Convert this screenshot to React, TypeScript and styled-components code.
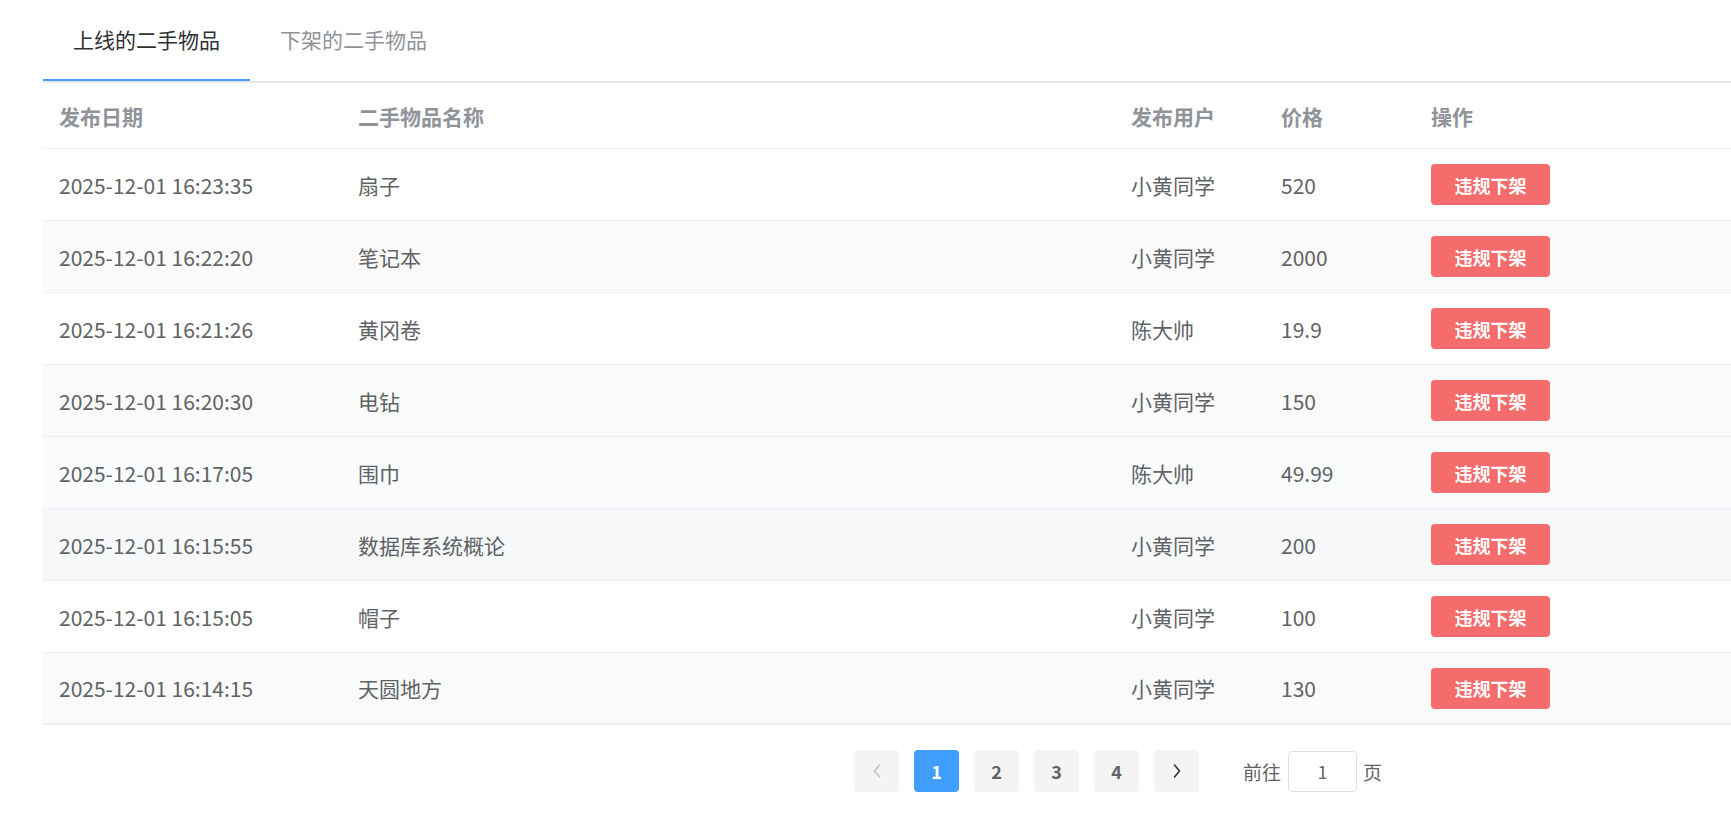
import React from "react";
import styled, { createGlobalStyle } from "styled-components";

const GlobalStyle = createGlobalStyle`
  html, body { margin: 0; padding: 0; background: #fff; }
  body { font-family: "Noto Sans CJK SC", "Noto Sans", sans-serif; }
  * { box-sizing: border-box; }
`;

const Page = styled.div`
  padding-left: 43px;
  width: 1731px;
  overflow: hidden;
`;

const TabBar = styled.div`
  display: flex;
  height: 83px;
  border-bottom: 2px solid #e4e7ed;
`;

const Tab = styled.div<{ $active?: boolean }>`
  height: 81px;
  padding: 0 30px;
  line-height: 78px;
  font-size: 21px;
  color: ${(p) => (p.$active ? "#303133" : "#909399")};
  border-bottom: 2px solid ${(p) => (p.$active ? "#409eff" : "transparent")};
`;

const Row = styled.div<{ $bg?: string; $header?: boolean; $last?: boolean }>`
  display: grid;
  grid-template-columns: 299px 773px 150px 150px 1fr;
  align-items: center;
  height: ${(p) => (p.$header ? "66px" : "72px")};
  background: ${(p) => p.$bg || "#fff"};
  border-bottom: ${(p) => (p.$last ? "2px" : "1px")} solid #ebeef5;
  font-size: 21px;
  color: ${(p) => (p.$header ? "#909399" : "#606266")};
  font-weight: ${(p) => (p.$header ? 700 : 400)};
`;

const Cell = styled.div`
  padding-left: 16px;
  white-space: nowrap;
  line-height: 28px;
`;

const DangerButton = styled.button`
  width: 119px;
  height: 41px;
  border: none;
  border-radius: 4px;
  background: #f56c6c;
  color: #fff;
  font-family: inherit;
  font-size: 18px;
  font-weight: 700;
  padding: 0;
  cursor: pointer;
`;

const Pager = styled.div`
  display: flex;
  align-items: center;
  padding-left: 811px;
  padding-top: 25px;
`;

const PageBtn = styled.div<{ $active?: boolean }>`
  width: 45px;
  height: 42px;
  margin-right: 15px;
  border-radius: 4px;
  display: flex;
  align-items: center;
  justify-content: center;
  background: ${(p) => (p.$active ? "#409eff" : "#f4f4f5")};
  color: ${(p) => (p.$active ? "#fff" : "#606266")};
  font-size: 18px;
  font-weight: 700;
`;

const Jumper = styled.div`
  display: flex;
  align-items: center;
  margin-left: 29px;
  font-size: 19px;
  color: #606266;
`;

const JumpInput = styled.div`
  width: 69px;
  height: 41px;
  margin: 0 6px 0 7px;
  border: 1px solid #dcdfe6;
  border-radius: 4px;
  display: flex;
  align-items: center;
  justify-content: center;
  font-size: 18px;
  color: #606266;
`;

const Chevron = ({ dir, color }: { dir: "left" | "right"; color: string }) => (
  <svg width="10" height="16" viewBox="0 0 10 16">
    <polyline
      points={dir === "left" ? "7.5,2 2.5,8 7.5,14" : "2.5,2 7.5,8 2.5,14"}
      fill="none"
      stroke={color}
      strokeWidth="1.6"
      strokeLinecap="round"
      strokeLinejoin="round"
    />
  </svg>
);

const rows = [
  ["2025-12-01 16:23:35", "扇子", "小黄同学", "520", "#ffffff"],
  ["2025-12-01 16:22:20", "笔记本", "小黄同学", "2000", "#fafafa"],
  ["2025-12-01 16:21:26", "黄冈卷", "陈大帅", "19.9", "#ffffff"],
  ["2025-12-01 16:20:30", "电钻", "小黄同学", "150", "#fafafa"],
  ["2025-12-01 16:17:05", "围巾", "陈大帅", "49.99", "#fafbfd"],
  ["2025-12-01 16:15:55", "数据库系统概论", "小黄同学", "200", "#f7f8fa"],
  ["2025-12-01 16:15:05", "帽子", "小黄同学", "100", "#ffffff"],
  ["2025-12-01 16:14:15", "天圆地方", "小黄同学", "130", "#fafafa"],
];

export default function App() {
  return (
    <Page>
      <GlobalStyle />
      <TabBar>
        <Tab $active>上线的二手物品</Tab>
        <Tab>下架的二手物品</Tab>
      </TabBar>
      <Row $header>
        <Cell>发布日期</Cell>
        <Cell>二手物品名称</Cell>
        <Cell>发布用户</Cell>
        <Cell>价格</Cell>
        <Cell>操作</Cell>
      </Row>
      {rows.map((r, i) => (
        <Row key={i} $bg={r[4]} $last={i === rows.length - 1}>
          <Cell>{r[0]}</Cell>
          <Cell>{r[1]}</Cell>
          <Cell>{r[2]}</Cell>
          <Cell>{r[3]}</Cell>
          <Cell>
            <DangerButton>违规下架</DangerButton>
          </Cell>
        </Row>
      ))}
      <Pager>
        <PageBtn>
          <Chevron dir="left" color="#c0c4cc" />
        </PageBtn>
        <PageBtn $active>1</PageBtn>
        <PageBtn>2</PageBtn>
        <PageBtn>3</PageBtn>
        <PageBtn>4</PageBtn>
        <PageBtn>
          <Chevron dir="right" color="#303133" />
        </PageBtn>
        <Jumper>
          前往
          <JumpInput>1</JumpInput>
          页
        </Jumper>
      </Pager>
    </Page>
  );
}
